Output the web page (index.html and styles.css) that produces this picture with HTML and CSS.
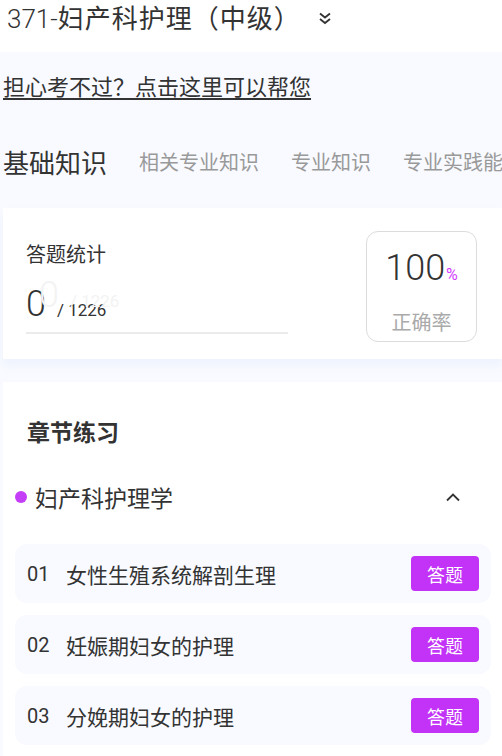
FILE: index.html
```html
<!DOCTYPE html>
<html lang="zh-CN">
<head>
  <meta charset="UTF-8" />
  <meta name="viewport" content="width=device-width, initial-scale=1.0" />
  <title>章节练习</title>
  <link rel="stylesheet" href="styles.css">
</head>
<body>
  <div class="topbar">
    <span class="subject">371-<span class="cn">妇产科护理（中级）</span></span>
    <svg class="dbl-arrow" width="14" height="14" viewBox="0 0 14 14">
      <path d="M2 2.5 L7 6.5 L12 2.5 M2 8 L7 12 L12 8" fill="none" stroke="#333" stroke-width="1.8" />
    </svg>
  </div>

  <div class="page">
    <a class="help-link" href="#">担心考不过？点击这里可以帮您</a>

    <div class="tabs">
      <span class="tab active">基础知识</span>
      <span class="tab">相关专业知识</span>
      <span class="tab">专业知识</span>
      <span class="tab">专业实践能力</span>
    </div>

    <div class="stats-card">
      <div class="stats-left">
        <div class="stats-title">答题统计</div>
        <div class="stats-count">
          <span class="done">0</span><span class="total">/ 1226</span>
          <span class="ghost"><span class="done">0</span><span class="total">/ 1226</span></span>
        </div>
      </div>
      <div class="rate-box">
        <div class="rate-num">100<span class="pct">%</span></div>
        <div class="rate-label">正确率</div>
      </div>
    </div>

    <div class="chapter-card">
      <h3>章节练习</h3>
      <div class="group-head">
        <span class="dot"></span>
        <span class="group-name">妇产科护理学</span>
        <svg class="up-arrow" width="16" height="10" viewBox="0 0 16 10">
          <path d="M2 8.5 L8 2.5 L14 8.5" fill="none" stroke="#333" stroke-width="1.8" />
        </svg>
      </div>
      <div id="chapterList"></div>
    </div>
  </div>

  <script>
    const chapters = [
      "女性生殖系统解剖生理",
      "妊娠期妇女的护理",
      "分娩期妇女的护理"
    ];

    const list = document.getElementById("chapterList");
    chapters.forEach((name, i) => {
      const row = document.createElement("div");
      row.className = "chapter-row";
      row.innerHTML = `
        <span class="num">${String(i + 1).padStart(2, "0")}</span>
        <span class="name">${name}</span>
        <button class="answer-btn">答题</button>
      `;
      list.appendChild(row);
    });
  </script>
</body>
</html>
```

FILE: styles.css
```css
body {
  margin: 0;
  font-family: Roboto, "Noto Sans CJK SC", sans-serif;
  color: #333;
  background-color: #f8faff;
  overflow: hidden;
}
.topbar {
  background: #fff;
  height: 52px;
  display: flex;
  align-items: center;
  padding-left: 7px;
  padding-bottom: 20px;
  box-sizing: border-box;
}
.subject {
  font-size: 26px;
  color: #333;
  font-weight: 300;
}
.subject .cn {
  letter-spacing: 1px;
  font-weight: normal;
}
.dbl-arrow {
  margin-left: 17px;
  margin-top: 4px;
}
.page {
  padding-left: 3px;
}
.help-link {
  display: inline-block;
  margin-top: 22px;
  font-size: 22px;
  line-height: 28px;
  color: #333;
  text-decoration: underline;
  text-underline-offset: 3px;
  text-decoration-thickness: 2px;
}
.tabs {
  display: flex;
  align-items: center;
  gap: 32px;
  margin-top: 42px;
  height: 34px;
  white-space: nowrap;
  overflow: hidden;
}
.tab {
  font-size: 20px;
  color: #999;
}
.tab.active {
  font-size: 26px;
  color: #333;
}
.stats-card {
  margin-top: 30px;
  background: #fff;
  height: 151px;
  display: flex;
  justify-content: space-between;
  padding: 23px 25px 0 23px;
  box-sizing: border-box;
  box-shadow: 0 6px 8px rgba(220, 230, 250, 0.35);
}
.stats-left {
  width: 262px;
}
.stats-title {
  font-size: 20px;
  line-height: 28px;
  margin-top: 10px;
}
.stats-count {
  position: relative;
  margin-top: 15px;
  height: 48px;
  border-bottom: 2px solid #ebebeb;
  display: flex;
  align-items: baseline;
}
.stats-count .done {
  font-size: 36px;
  line-height: 40px;
  font-weight: 300;
}
.stats-count .total {
  font-size: 17px;
  margin-left: 11px;
}
.stats-count .ghost {
  position: absolute;
  left: 13px;
  top: -9px;
  display: flex;
  align-items: baseline;
  color: #f3f3f3;
}
.rate-box {
  width: 111px;
  height: 111px;
  border: 1px solid #dcdcdc;
  border-radius: 12px;
  box-sizing: border-box;
  text-align: center;
}
.rate-num {
  font-size: 36px;
  line-height: 40px;
  margin-top: 16px;
  font-weight: 300;
}
.pct {
  font-size: 16px;
  color: #d23cff;
  margin-left: 1px;
  font-weight: normal;
}
.rate-label {
  font-size: 20px;
  color: #aaa;
  margin-top: 12px;
}
.chapter-card {
  margin-top: 23px;
  background: #fff;
  padding: 34px 11px 20px 12px;
  min-height: 400px;
}
.chapter-card h3 {
  margin: 0 0 0 12px;
  font-size: 23px;
  line-height: 30px;
  font-weight: bold;
  font-family: "Noto Sans CJK SC", sans-serif;
}
.group-head {
  display: flex;
  align-items: center;
  height: 40px;
  margin-top: 31px;
  padding-right: 30px;
}
.dot {
  width: 12px;
  height: 12px;
  border-radius: 50%;
  background: #c43df7;
  margin-right: 8px;
}
.group-name {
  font-size: 23px;
  flex: 1;
}
.chapter-row {
  display: flex;
  align-items: center;
  height: 59px;
  background: #f8faff;
  border-radius: 12px;
  margin-top: 12px;
  padding: 0 12px 0 12px;
}
#chapterList {
  margin-top: 27px;
}
.chapter-row .num {
  font-size: 20px;
  width: 39px;
}
.chapter-row .name {
  font-size: 21px;
  flex: 1;
}
.answer-btn {
  width: 68px;
  height: 35px;
  border: none;
  border-radius: 4px;
  background-color: #c233f7;
  color: #fff;
  font-size: 18px;
  font-family: "Noto Sans CJK SC", sans-serif;
  padding: 0;
}
```
